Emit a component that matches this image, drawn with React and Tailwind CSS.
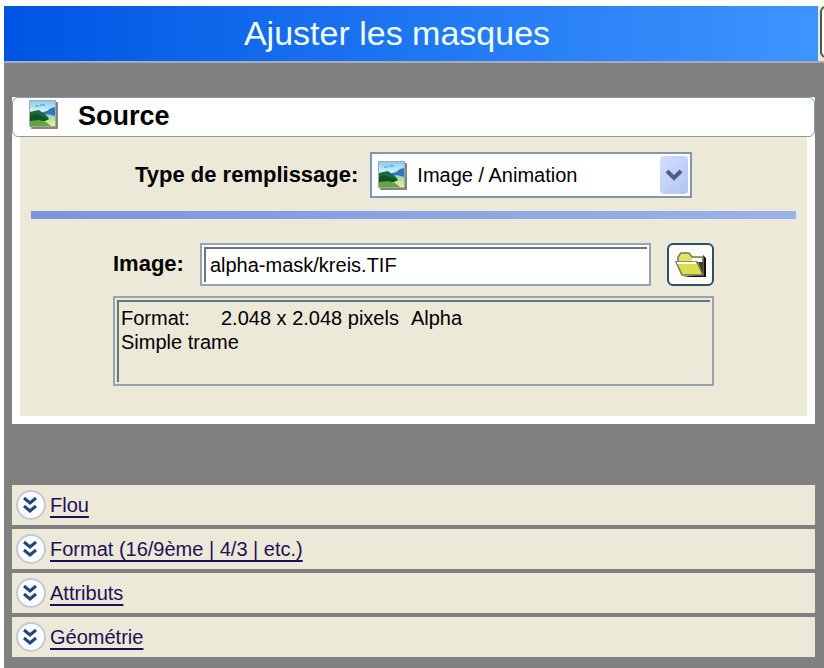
import React, { useState } from 'react';

const sections = ['Flou', 'Format (16/9ème | 4/3 | etc.)', 'Attributs', 'Géométrie'];

const PictureIcon = () => (
  <svg width="29" height="29" viewBox="0 0 29 29" className="shrink-0" aria-hidden="true">
    <defs>
      <linearGradient id="sky" x1="0" y1="0" x2="0" y2="1">
        <stop offset="0" stopColor="#86cdf0" />
        <stop offset="0.4" stopColor="#d3f1fb" />
      </linearGradient>
      <linearGradient id="sand" x1="0" y1="0" x2="0" y2="1">
        <stop offset="0" stopColor="#8fd0c0" />
        <stop offset="1" stopColor="#f3ef8c" />
      </linearGradient>
    </defs>
    <rect x="2" y="2" width="27" height="27" rx="1" fill="#85857f" />
    <rect x="0" y="0" width="27" height="27" rx="1" fill="#a3aaa5" />
    <rect x="1" y="1" width="25" height="25" fill="url(#sky)" />
    <path d="M6 6h4M11 5h5" stroke="#5fa9de" strokeWidth="1.5" />
    <path d="M11 13l7-2 4-3 4-1v9l-8 3z" fill="#2f78bf" />
    <path d="M12 16l7-2 7 2v10H8z" fill="url(#sand)" />
    <path d="M1 12l4-1 5-1 4 3 4 3 2 3-6 2H1z" fill="#1d6a3c" />
    <path d="M1 16l5-2 6 2 8 3-4 2-15 1z" fill="#0f5424" />
    <path d="M1 21l9-1 7 2 5 4H1z" fill="#62a53c" />
  </svg>
);

const FolderIcon = () => (
  <svg width="34" height="30" viewBox="0 0 34 30" aria-hidden="true">
    <path d="M9 27h23V8l-3-3v19z" fill="#111" />
    <path d="M4 12V7l3-4h8l3 4h11v17H9z" fill="#dfe36a" stroke="#77775c" strokeWidth="1.5" />
    <path d="M18 8h10v5H18z" fill="#f8f8ef" />
    <path d="M2 12h21l6 13H8z" fill="#d9df4e" stroke="#77775c" strokeWidth="1.5" />
    <path d="M3 13h19" stroke="#fff" strokeWidth="2" />
    <path d="M24 12l5 12V12z" fill="#3c3c34" />
  </svg>
);

const ExpandIcon = () => (
  <svg width="30" height="30" viewBox="0 0 30 30" className="shrink-0" aria-hidden="true">
    <circle cx="15" cy="15" r="14" fill="#fbfcff" stroke="#c6c8d6" strokeWidth="2" />
    <path d="M8 8l6 5 6-5M8 16l6 5 6-5" fill="none" stroke="#20467c" strokeWidth="3" />
  </svg>
);

const App = () => {
  const [fillType, setFillType] = useState('image');
  const [image, setImage] = useState('alpha-mask/kreis.TIF');

  return (
    <div className="min-h-screen flex flex-col bg-white pt-1.5 pl-1 text-xl text-black font-['Liberation_Sans',Arial,sans-serif]">
      {/* Title bar */}
      <header className="flex h-[55px] overflow-hidden bg-[#ece9d8]">
        <h1 className="flex-1 bg-linear-to-r from-[#0054e3] to-[#3c95ff] pr-7 text-center text-[34px] leading-[54px] text-[#f0ffff]">
          Ajuster les masques
        </h1>
        <div className="w-1.5 pl-0.5">
          <button aria-label="Options" className="h-[52px] w-10 rounded-md border-2 border-[#405c65] bg-white"></button>
        </div>
      </header>

      <main className="flex-1 border-t-2 border-[#a5adb8] bg-[#808080] pt-[34px] pr-[9px] pb-2 pl-2">
        {/* Source panel */}
        <section className="bg-white">
          <h2 className="flex h-10 items-start gap-5 rounded-md border border-[#8a98a8] bg-white pt-0.5 pl-4 text-[27px] leading-8 font-bold">
            <PictureIcon />
            Source
          </h2>

          <div className="mx-2 bg-[#ece9d8] pt-[15px] pb-[30px]">
            <div className="mx-[115px] flex items-center gap-3">
              <label htmlFor="fill-type" className="text-[22px] font-bold">Type de remplissage:</label>
              <div className="flex h-[46px] flex-1 items-center border-2 border-[#8297ab] bg-white pr-0.5 pl-1.5">
                <PictureIcon />
                <select
                  id="fill-type"
                  value={fillType}
                  onChange={(e) => setFillType(e.target.value)}
                  className="h-full min-w-0 flex-1 appearance-none bg-white pl-2.5 outline-none"
                >
                  <option value="image">Image / Animation</option>
                </select>
                <span className="flex h-[38px] w-7 items-center justify-center rounded-sm bg-linear-to-br from-[#d3dffc] to-[#b1c4f3]">
                  <svg width="18" height="14" viewBox="0 0 18 14" aria-hidden="true">
                    <path d="M2 3l7 7 7-7" fill="none" stroke="#4a6087" strokeWidth="4" />
                  </svg>
                </span>
              </div>
            </div>

            <div className="mx-[11px] mt-[13px] mb-6 h-2 bg-linear-to-r from-[#7b95dd] to-[#9bb2e8]"></div>

            <div className="mx-[93px]">
              <div className="flex items-center">
                <label htmlFor="image-file" className="mr-4 text-[22px] font-bold">Image:</label>
                <div className="mr-4 h-[43px] flex-1 border-2 border-[#93a5b3] bg-white p-0.5">
                  <input
                    id="image-file"
                    type="text"
                    value={image}
                    onChange={(e) => setImage(e.target.value)}
                    className="h-full w-full border-t-2 border-l-2 border-[#6d7478] bg-white pl-1 outline-none"
                  />
                </div>
                <button
                  aria-label="Parcourir"
                  className="flex h-[43px] w-[47px] items-center justify-center rounded-md border-2 border-[#2d506c] bg-[#fbfbf8]"
                >
                  <FolderIcon />
                </button>
              </div>

              <div className="mt-2.5 h-[90px] border-2 border-[#93a5b3] p-0.5">
                <div className="h-full border-t-2 border-l-2 border-[#6d7478] pt-1 pl-0.5 leading-6">
                  <p className="flex">
                    <span className="w-[100px]">Format:</span>
                    <span className="mr-3">2.048 x 2.048 pixels</span>
                    <span>Alpha</span>
                  </p>
                  <p>Simple trame</p>
                </div>
              </div>
            </div>
          </div>
          <div className="h-2"></div>
        </section>

        {/* Collapsed sections */}
        <nav className="mt-[61px] flex flex-col gap-1">
          {sections.map((name) => (
            <div key={name} className="flex h-10 items-center gap-1 bg-[#ece9d8] pl-1">
              <ExpandIcon />
              <a href="#" className="text-[#1c1058] underline decoration-2 underline-offset-4">{name}</a>
            </div>
          ))}
        </nav>
      </main>
    </div>
  );
};

export default App;
